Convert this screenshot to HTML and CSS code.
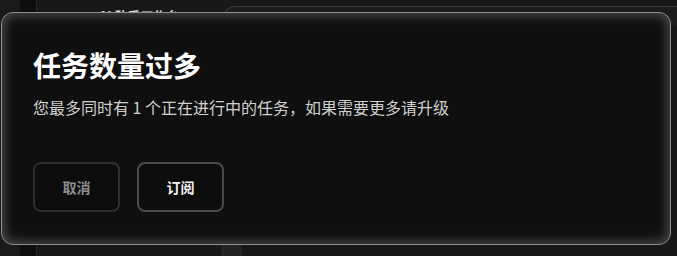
FILE: index.html
```html
<!DOCTYPE html>
<html lang="zh-CN">
<head>
<meta charset="utf-8">
<title>任务数量过多</title>
<link rel="stylesheet" href="styles.css">
</head>
<body>
<div class="page">
  <div class="gutter"></div>
  <aside class="sidebar"></aside>
  <main class="main">
    <div class="topbar">
      <div class="top-title">AI 助手工作台</div>
      <div class="top-card"></div>
    </div>
    <div class="content">
      <div class="content-col"></div>
      <div class="content-box"></div>
    </div>
  </main>
</div>

<div class="modal" role="dialog">
  <h1 class="modal-title">任务数量过多</h1>
  <p class="modal-text">您最多同时有 1 个正在进行中的任务，如果需要更多请升级</p>
  <div class="modal-actions">
    <button class="btn btn-cancel">取消</button>
    <button class="btn btn-primary">订阅</button>
  </div>
</div>
</body>
</html>
```

FILE: styles.css
```css
* { box-sizing: border-box; }
html, body {
  margin: 0;
  padding: 0;
  width: 677px;
  height: 256px;
  overflow: hidden;
  background: #1a1a1a;
  font-family: "Noto Sans CJK SC", "Noto Sans", sans-serif;
}
.page {
  display: flex;
  height: 256px;
}
.gutter {
  width: 20px;
  background: #1a1a1a;
}
.sidebar {
  width: 17px;
  background: #0e0e0e;
  border-right: 1px solid #262626;
}
.main {
  flex: 1;
  display: flex;
  flex-direction: column;
  background: #181818;
}
.topbar {
  height: 14px;
  display: flex;
  align-items: flex-start;
  overflow: visible;
}
.top-title {
  margin-left: 62px;
  width: 125px;
  color: #d8d8d8;
  font-size: 13px;
  line-height: 16px;
  height: 24px;
  font-weight: 700;
  padding-top: 8px;
  white-space: nowrap;
}
.top-card {
  flex: 1;
  margin-top: 6px;
  height: 20px;
  border-top: 1px solid #3a3a3a;
  border-left: 1px solid #3a3a3a;
  border-top-left-radius: 10px;
  background: #1c1c1c;
}
.content {
  flex: 1;
  display: flex;
  align-items: flex-end;
}
.content-col {
  width: 185px;
}
.content-box {
  width: 20px;
  height: 12px;
  background: #232323;
  border-left: 1px solid #2c2c2c;
}

.modal {
  position: absolute;
  left: 1px;
  top: 12px;
  width: 670px;
  height: 233px;
  background: #0f0f0f;
  border: 1px solid #8e8e8e;
  border-radius: 12px;
  box-shadow: inset 0 0 12px 2px rgba(210, 210, 210, 0.33);
  padding: 35px 31px 0;
}
.modal-title {
  margin: 0;
  height: 34px;
  font-size: 28px;
  line-height: 34px;
  font-weight: 700;
  color: #ffffff;
}
.modal-text {
  margin: 13px 0 0;
  height: 24px;
  font-size: 16px;
  line-height: 24px;
  color: #d0d0d0;
}
.modal-actions {
  margin-top: 43px;
  display: flex;
  gap: 17px;
}
.btn {
  width: 87px;
  height: 50px;
  border-radius: 8px;
  background: #0d0d0d;
  font-family: "Noto Sans CJK SC", "Noto Sans", sans-serif;
  font-size: 14px;
  font-weight: 700;
  padding: 0;
  display: flex;
  align-items: center;
  justify-content: center;
}
.btn-cancel {
  border: 2px solid #2e2e2e;
  color: #8e8e8e;
}
.btn-primary {
  border: 2px solid #4a4a4a;
  color: #f0f0f0;
}
```
